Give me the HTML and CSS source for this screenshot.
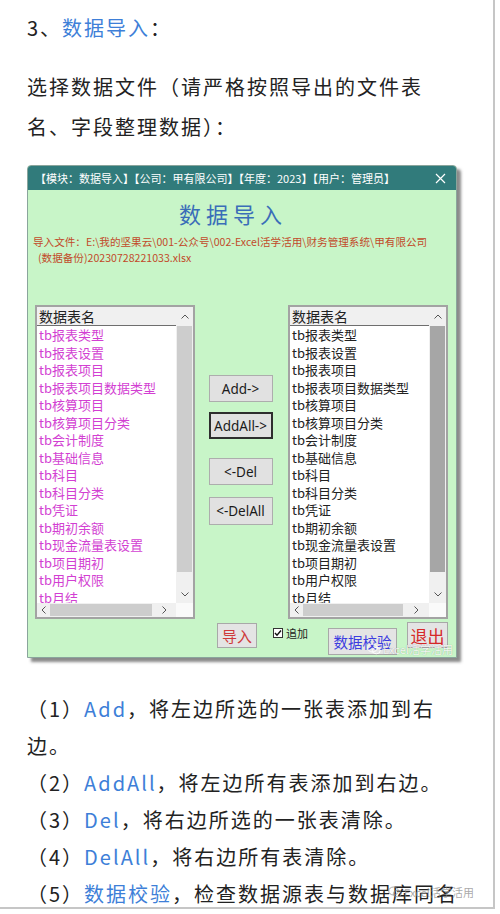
FILE: index.html
```html
<!DOCTYPE html>
<html lang="zh-CN">
<head>
<meta charset="utf-8">
<title>数据导入</title>
<link rel="stylesheet" href="styles.css">
</head>
<body>
<div class="frame">
  <div class="article">
    <p class="heading">3、<span class="hl">数据导入</span>：</p>
    <p class="para">选择数据文件（请严格按照导出的文件表<br>名、字段整理数据）：</p>

    <div class="dialog">
      <div class="titlebar">
        <span class="title-text">【模块：数据导入】【公司：甲有限公司】【年度：2023】【用户：管理员】</span>
        <svg class="close" width="11" height="11" viewBox="0 0 11 11"><path d="M1 1L10 10M10 1L1 10" stroke="#fff" stroke-width="1.2" fill="none"/></svg>
      </div>
      <div class="dlg-title">数据导入</div>
      <div class="path">
        <div class="path-line">导入文件：E:\我的坚果云\001-公众号\002-Excel活学活用\财务管理系统\甲有限公司</div>
        <div class="path-line second">(数据备份)20230728221033.xlsx</div>
      </div>

      <div class="lists">
        <div class="listbox source">
          <div class="lb-main">
            <div class="lb-content">
              <div class="lb-head">数据表名</div>
              <ul class="lb-items">
                <li>tb报表类型</li>
                <li>tb报表设置</li>
                <li>tb报表项目</li>
                <li>tb报表项目数据类型</li>
                <li>tb核算项目</li>
                <li>tb核算项目分类</li>
                <li>tb会计制度</li>
                <li>tb基础信息</li>
                <li>tb科目</li>
                <li>tb科目分类</li>
                <li>tb凭证</li>
                <li>tb期初余额</li>
                <li>tb现金流量表设置</li>
                <li>tb项目期初</li>
                <li>tb用户权限</li>
                <li>tb月结</li>
              </ul>
            </div>
            <div class="vscroll">
              <div class="vs-up"><svg width="8" height="5" viewBox="0 0 8 5"><path d="M0.5 4.5L4 1L7.5 4.5" stroke="#555" fill="none"/></svg></div>
              <div class="vs-thumb"></div>
              <div class="vs-track"></div>
              <div class="vs-down"><svg width="8" height="5" viewBox="0 0 8 5"><path d="M0.5 0.5L4 4L7.5 0.5" stroke="#555" fill="none"/></svg></div>
            </div>
          </div>
          <div class="hscroll">
            <div class="hs-left"><svg width="5" height="8" viewBox="0 0 5 8"><path d="M4.5 0.5L1 4L4.5 7.5" stroke="#555" fill="none"/></svg></div>
            <div class="hs-thumb"></div>
            <div class="hs-right"><svg width="5" height="8" viewBox="0 0 5 8"><path d="M0.5 0.5L4 4L0.5 7.5" stroke="#555" fill="none"/></svg></div>
            <div class="hs-corner"></div>
          </div>
        </div>

        <div class="mid">
          <div class="btn add">Add-&gt;</div>
          <div class="btn addall">AddAll-&gt;</div>
          <div class="btn del">&lt;-Del</div>
          <div class="btn delall">&lt;-DelAll</div>
        </div>

        <div class="listbox target">
          <div class="lb-main">
            <div class="lb-content">
              <div class="lb-head">数据表名</div>
              <ul class="lb-items">
                <li>tb报表类型</li>
                <li>tb报表设置</li>
                <li>tb报表项目</li>
                <li>tb报表项目数据类型</li>
                <li>tb核算项目</li>
                <li>tb核算项目分类</li>
                <li>tb会计制度</li>
                <li>tb基础信息</li>
                <li>tb科目</li>
                <li>tb科目分类</li>
                <li>tb凭证</li>
                <li>tb期初余额</li>
                <li>tb现金流量表设置</li>
                <li>tb项目期初</li>
                <li>tb用户权限</li>
                <li>tb月结</li>
              </ul>
            </div>
            <div class="vscroll">
              <div class="vs-up"><svg width="8" height="5" viewBox="0 0 8 5"><path d="M0.5 4.5L4 1L7.5 4.5" stroke="#555" fill="none"/></svg></div>
              <div class="vs-thumb"></div>
              <div class="vs-track"></div>
              <div class="vs-down"><svg width="8" height="5" viewBox="0 0 8 5"><path d="M0.5 0.5L4 4L7.5 0.5" stroke="#555" fill="none"/></svg></div>
            </div>
          </div>
          <div class="hscroll">
            <div class="hs-left"><svg width="5" height="8" viewBox="0 0 5 8"><path d="M4.5 0.5L1 4L4.5 7.5" stroke="#555" fill="none"/></svg></div>
            <div class="hs-thumb"></div>
            <div class="hs-right"><svg width="5" height="8" viewBox="0 0 5 8"><path d="M0.5 0.5L4 4L0.5 7.5" stroke="#555" fill="none"/></svg></div>
            <div class="hs-corner"></div>
          </div>
        </div>
      </div>

      <div class="actions">
        <div class="abtn import">导入</div>
        <div class="check">
          <span class="cb"><svg width="8" height="8" viewBox="0 0 8 8"><path d="M1 4L3 6.2L7 1.5" stroke="#111" stroke-width="1.4" fill="none"/></svg></span>
          <span class="cb-label">追加</span>
        </div>
        <div class="abtn verify">数据校验</div>
        <div class="abtn quit">退出</div>
      </div>

      <div class="wm wm-dialog">
        <svg width="14" height="12" viewBox="0 0 14 12"><ellipse cx="5.5" cy="5" rx="4.8" ry="4" fill="none" stroke="currentColor"/><ellipse cx="9.3" cy="7.6" rx="3.9" ry="3.2" fill="none" stroke="currentColor"/></svg>
        <span>Excel活学活用</span>
      </div>
    </div>

    <div class="notes">
      <p>（1）<span class="hl">Add</span>，将左边所选的一张表添加到右<br>边。</p>
      <p>（2）<span class="hl">AddAll</span>，将左边所有表添加到右边。</p>
      <p>（3）<span class="hl">Del</span>，将右边所选的一张表清除。</p>
      <p>（4）<span class="hl">DelAll</span>，将右边所有表清除。</p>
      <p>（5）<span class="hl">数据校验</span>，检查数据源表与数据库同名</p>
    </div>
  </div>

  <div class="wm wm-page">
    <svg width="14" height="12" viewBox="0 0 14 12"><ellipse cx="5.5" cy="5" rx="4.8" ry="4" fill="none" stroke="currentColor"/><ellipse cx="9.3" cy="7.6" rx="3.9" ry="3.2" fill="none" stroke="currentColor"/></svg>
    <span>Excel活学活用</span>
  </div>
</div>
</body>
</html>
```

FILE: styles.css
```css
* { box-sizing: border-box; }
html, body { margin: 0; padding: 0; background: #fff; }
body {
  font-family: "Noto Sans CJK SC", "Noto Sans", sans-serif;
  color: #222;
}

.frame {
  position: relative;
  width: 495px;
  height: 909px;
  border-right: 2px solid #c6c6c6;
  border-bottom: 2px solid #c6c6c6;
  overflow: hidden;
}

.article { padding-left: 27px; }

.heading {
  margin: 9px 0 0;
  font-size: 20px;
  line-height: 38px;
  letter-spacing: 2px;
  white-space: nowrap;
}
.hl { color: #3e7fd8; }

.para {
  margin: 20px 0 0;
  font-size: 20px;
  line-height: 40px;
  letter-spacing: 2px;
  white-space: nowrap;
}

/* ---------- dialog ---------- */
.dialog {
  position: relative;
  margin-top: 18px;
  width: 430px;
  border: 1px solid #8aa59c;
  border-radius: 4px 4px 0 0;
  background: #c8f5c8;
  box-shadow: 4px 4px 3px rgba(60, 60, 60, 0.6);
}

.titlebar {
  height: 24px;
  background: #317b7b;
  border-radius: 3px 3px 0 0;
  display: flex;
  align-items: center;
  justify-content: space-between;
  padding: 0 10px 0 7px;
}
.title-text {
  font-size: 11px;
  color: #fff;
  white-space: nowrap;
}
.close { display: block; }

.dlg-title {
  margin-top: 10px;
  text-align: center;
  font-size: 22px;
  line-height: 26px;
  letter-spacing: 5px;
  color: #3a6db8;
  padding-right: 18px;
}

.path {
  margin-top: 8px;
  padding-left: 5px;
  font-size: 10.6px;
  line-height: 16px;
  color: #c24a2a;
  white-space: nowrap;
}
.path-line.second { padding-left: 5px; }

.lists {
  display: flex;
  margin-top: 39px;
  padding-left: 7px;
  height: 314px;
}

.listbox {
  width: 160px;
  height: 314px;
  border: 2px solid #a3a3a3;
  background: #fff;
  display: flex;
  flex-direction: column;
}
.lb-main {
  flex: 1;
  display: flex;
  min-height: 0;
}
.lb-content {
  flex: 1;
  overflow: hidden;
}
.lb-head {
  height: 19px;
  background: #f0f0f0;
  border-bottom: 1px solid #6e6e6e;
  font-size: 14px;
  line-height: 18px;
  padding-left: 2px;
  color: #222;
  white-space: nowrap;
}
.lb-items {
  list-style: none;
  margin: 0;
  padding: 0 0 0 2px;
  font-size: 13px;
  line-height: 17.5px;
  white-space: nowrap;
}
.source .lb-items { color: #d23fd2; }
.target .lb-items { color: #222; }

.vscroll {
  width: 17px;
  background: #f0f0f0;
  display: flex;
  flex-direction: column;
}
.vs-up, .vs-down {
  display: flex;
  align-items: center;
  justify-content: center;
}
.vs-up { height: 19px; }
.vs-down { height: 17px; }
.vs-thumb {
  height: 246px;
  margin: 0 1px;
  background: #cdcdcd;
}
.target .vs-thumb { background: #a6a6a6; }
.vs-track { flex: 1; }

.hscroll {
  height: 14px;
  display: flex;
  align-items: center;
  background: #f0f0f0;
}
.hs-left {
  width: 13px;
  display: flex;
  justify-content: center;
}
.hs-thumb {
  width: 102px;
  height: 12px;
  background: #cdcdcd;
}
.target .hs-thumb { width: 100px; }
.hs-right {
  flex: 1;
  display: flex;
  justify-content: center;
}
.hs-corner {
  width: 17px;
  height: 100%;
  background: #fafafa;
}

.mid {
  width: 93px;
  display: flex;
  flex-direction: column;
  align-items: center;
  padding-top: 70px;
  padding-right: 2px;
}
.btn {
  width: 64px;
  height: 27px;
  background: #e1e1e1;
  border: 1px solid #adadad;
  font-family: "Noto Sans", sans-serif;
  font-size: 13.5px;
  color: #1a1a1a;
  display: flex;
  align-items: center;
  justify-content: center;
  white-space: nowrap;
}
.btn.addall { margin-top: 10px; border: 2px solid #2e2e2e; }
.btn.del { margin-top: 19px; }
.btn.delall { margin-top: 12px; height: 28px; }

/* ---------- action row ---------- */
.actions {
  display: flex;
  align-items: flex-start;
  height: 38px;
  padding-left: 189px;
}
.abtn {
  background: #e4e4e4;
  border: 1px solid #a8a8a8;
  display: flex;
  align-items: center;
  justify-content: center;
  white-space: nowrap;
}
.abtn.import {
  margin-top: 4px;
  width: 40px;
  height: 25px;
  font-size: 15px;
  color: #cf3a3a;
}
.check {
  margin-left: 16px;
  margin-top: 8px;
  display: flex;
  align-items: center;
  gap: 3px;
}
.cb {
  width: 10px;
  height: 10px;
  border: 1px solid #333;
  background: #fff;
  display: flex;
  align-items: center;
  justify-content: center;
}
.cb-label {
  font-size: 11px;
  line-height: 12px;
  color: #222;
}
.abtn.verify {
  margin-left: 20px;
  margin-top: 9px;
  width: 69px;
  height: 27px;
  font-size: 14.5px;
  color: #3c3ce0;
}
.abtn.quit {
  margin-left: 10px;
  margin-top: 3px;
  width: 41px;
  height: 26px;
  font-size: 17px;
  color: #d62828;
}

/* ---------- watermarks ---------- */
.wm {
  position: absolute;
  display: flex;
  align-items: center;
  gap: 2px;
  font-size: 11px;
  white-space: nowrap;
}
.wm-dialog {
  left: 339px;
  top: 475px;
  color: rgba(255, 255, 255, 0.9);
  text-shadow: 0 0 1px rgba(0, 0, 0, 0.35);
}
.wm-page {
  left: 388px;
  top: 884px;
  color: rgba(140, 140, 140, 0.75);
}

/* ---------- notes ---------- */
.notes {
  margin-top: 32px;
  font-size: 20px;
  line-height: 37px;
  letter-spacing: 2px;
  white-space: nowrap;
}
.notes p { margin: 0; }
```
